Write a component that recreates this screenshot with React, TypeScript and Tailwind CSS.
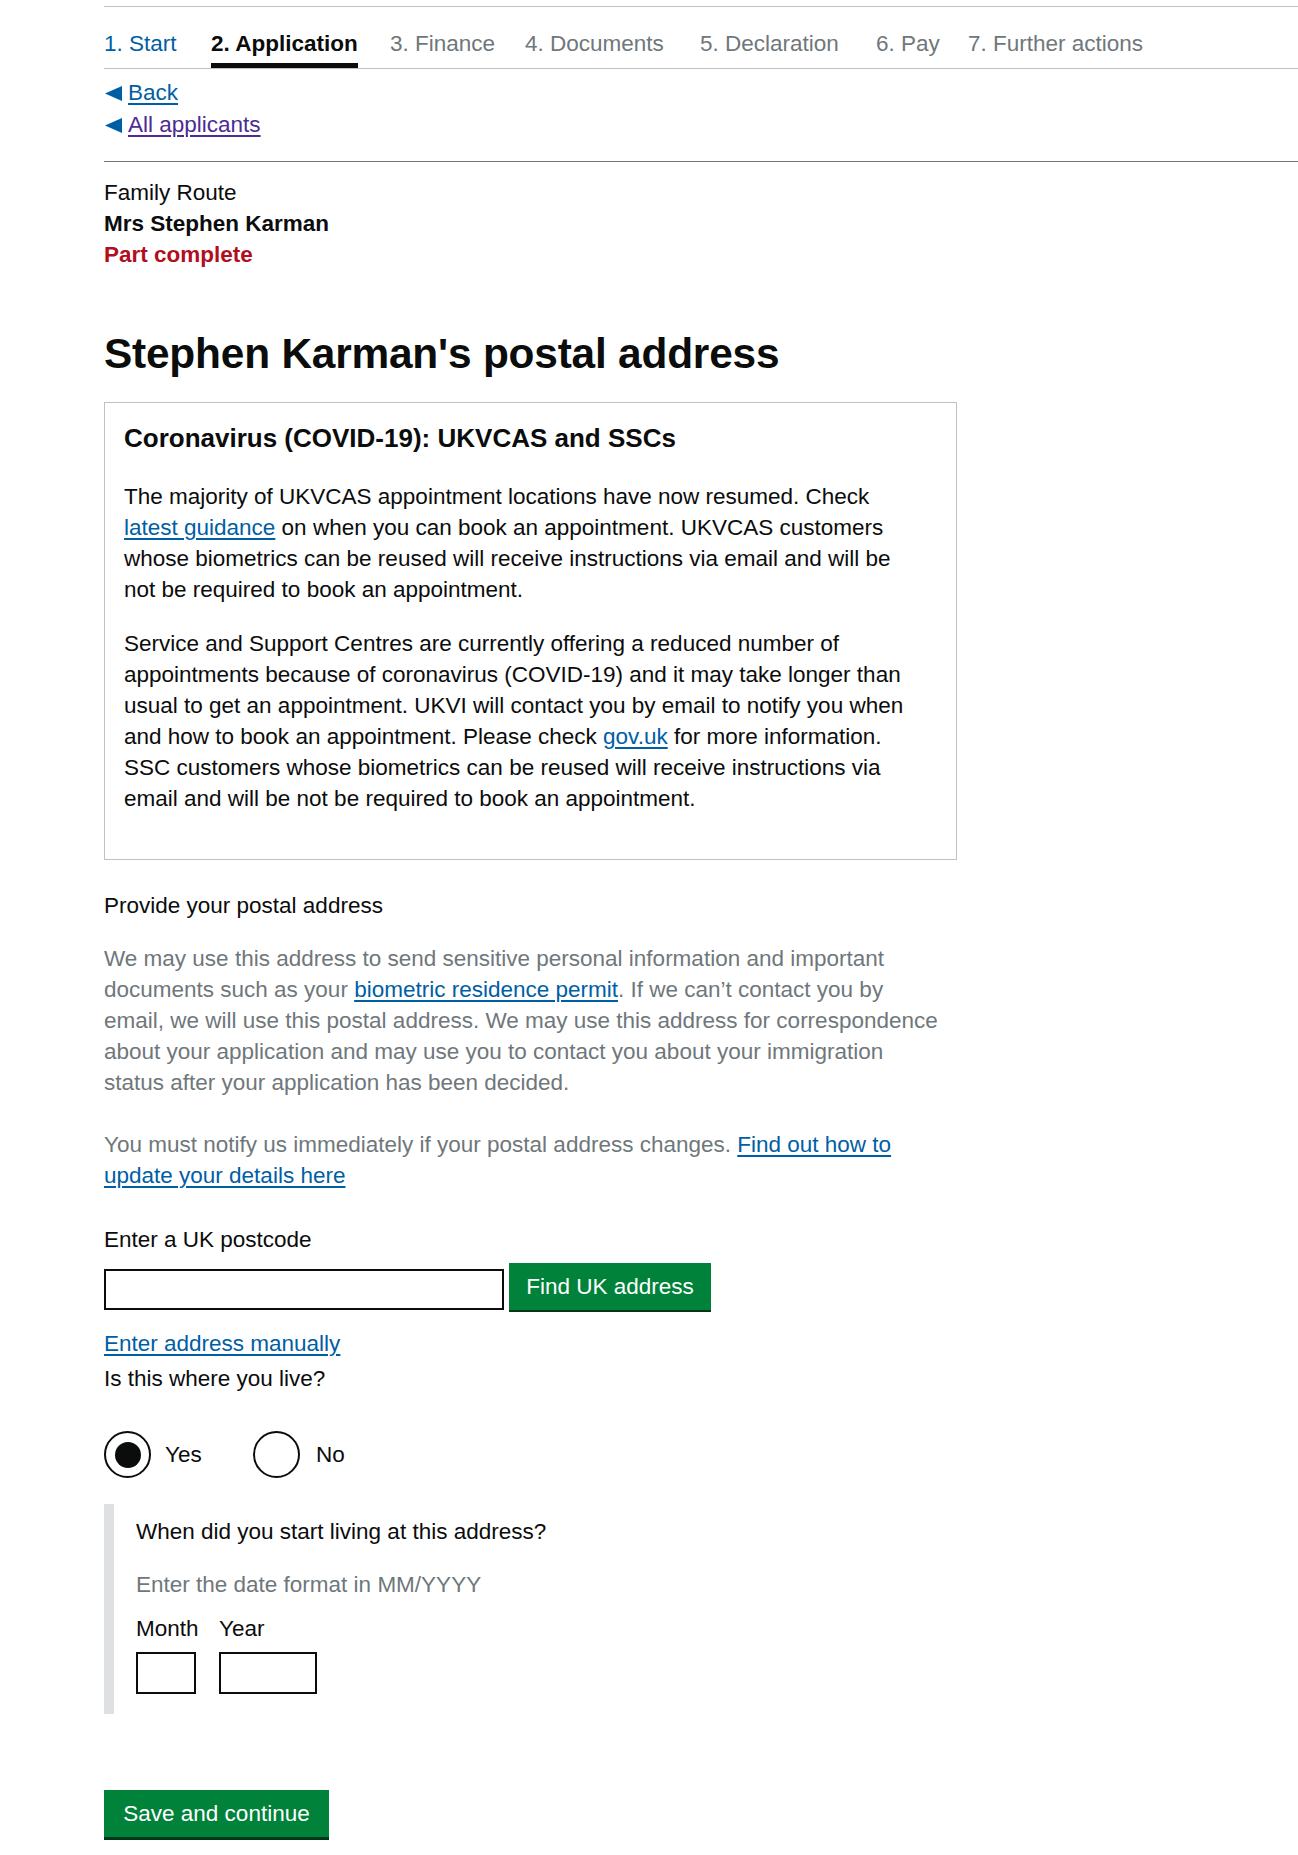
import React from "react";

const tabs = [
  { label: "1. Start", w: "w-[107px]", kind: "link" },
  { label: "2. Application", w: "w-[179px]", kind: "active" },
  { label: "3. Finance", w: "w-[135px]", kind: "off" },
  { label: "4. Documents", w: "w-[175px]", kind: "off" },
  { label: "5. Declaration", w: "w-[176px]", kind: "off" },
  { label: "6. Pay", w: "w-[92px]", kind: "off" },
  { label: "7. Further actions", w: "w-[200px]", kind: "off" },
];

function Triangle() {
  return (
    <svg width="17" height="15" viewBox="0 0 17 15" className="shrink-0">
      <polygon points="0,7.5 17,0 17,15" fill="#005ea5" />
    </svg>
  );
}

const link = "text-[#005ea5] underline decoration-2 underline-offset-[3px]";

export default function App() {
  return (
    <div className="min-h-screen bg-white font-['Liberation_Sans',Arial,sans-serif] text-[22.5px] leading-[31px] text-[#0b0c0c]">
      <div className="pl-[104px] pt-[6px] pb-[15px]">
        {/* Tabs */}
        <nav className="flex border-y border-[#bfc1c3]">
          {tabs.map((t) => (
            <div key={t.label} className={`${t.w} shrink-0 pt-[21px]`}>
              {t.kind === "active" ? (
                <span className="inline-block whitespace-nowrap border-b-[5px] border-[#0b0c0c] pb-[4px] font-bold text-[#0b0c0c]">
                  {t.label}
                </span>
              ) : t.kind === "link" ? (
                <span className="inline-block whitespace-nowrap pb-[9px] text-[#005ea5]">{t.label}</span>
              ) : (
                <span className="inline-block whitespace-nowrap pb-[9px] text-[#6f777b]">{t.label}</span>
              )}
            </div>
          ))}
        </nav>

        {/* Back links */}
        <div className="mt-[8px] leading-[32px]">
          <div className="flex items-center gap-[6px] pl-[1px]">
            <Triangle />
            <a href="#" className={link}>Back</a>
          </div>
          <div className="flex items-center gap-[6px] pl-[1px]">
            <Triangle />
            <a href="#" className="text-[#4c2c92] underline decoration-2 underline-offset-[3px]">All applicants</a>
          </div>
        </div>

        <div className="mt-[20px] h-px bg-[#6f777b]" />

        {/* Meta */}
        <div className="mt-[15px]">
          <div>Family Route</div>
          <div className="font-bold">Mrs Stephen Karman</div>
          <div className="font-bold text-[#b10e1e]">Part complete</div>
        </div>

        <h1 className="mt-[59px] text-[42.4px] font-bold leading-[50px] tracking-[-0.2px]">Stephen Karman's postal address</h1>

        {/* COVID box */}
        <div className="mt-[23px] w-[853px] border border-[#bfc1c3] px-[19px] pt-[19px] pb-[45px]">
          <h2 className="text-[26px] font-bold leading-[32px]">Coronavirus (COVID-19): UKVCAS and SSCs</h2>
          <p className="mt-[27px] whitespace-nowrap">
            The majority of UKVCAS appointment locations have now resumed. Check
            <br />
            <a href="#" className={link}>latest guidance</a> on when you can book an appointment. UKVCAS customers
            <br />
            whose biometrics can be reused will receive instructions via email and will be
            <br />
            not be required to book an appointment.
          </p>
          <p className="mt-[23px] whitespace-nowrap">
            Service and Support Centres are currently offering a reduced number of
            <br />
            appointments because of coronavirus (COVID-19) and it may take longer than
            <br />
            usual to get an appointment. UKVI will contact you by email to notify you when
            <br />
            and how to book an appointment. Please check <a href="#" className={link}>gov.uk</a> for more information.
            <br />
            SSC customers whose biometrics can be reused will receive instructions via
            <br />
            email and will be not be required to book an appointment.
          </p>
        </div>

        <div className="mt-[30px]">Provide your postal address</div>

        <p className="mt-[22px] whitespace-nowrap text-[#6f777b]">
          We may use this address to send sensitive personal information and important
          <br />
          documents such as your <a href="#" className={link}>biometric residence permit</a>. If we can’t contact you by
          <br />
          email, we will use this postal address. We may use this address for correspondence
          <br />
          about your application and may use you to contact you about your immigration
          <br />
          status after your application has been decided.
        </p>

        <p className="mt-[31px] whitespace-nowrap text-[#6f777b]">
          You must notify us immediately if your postal address changes. <a href="#" className={link}>Find out how to</a>
          <br />
          <a href="#" className={link}>update your details here</a>
        </p>

        <label className="mt-[33px] block">Enter a UK postcode</label>
        <div className="mt-[8px] flex items-end gap-[5px]">
          <input type="text" className="h-[41px] w-[400px] border-2 border-[#0b0c0c] bg-white px-2 outline-none" />
          <button className="h-[47px] w-[202px] bg-[#00823b] text-center text-white shadow-[0_2px_0_#003618]">
            Find UK address
          </button>
        </div>

        <div className="mt-[18px]">
          <a href="#" className={link}>Enter address manually</a>
        </div>
        <div className="mt-[4px]">Is this where you live?</div>

        {/* Radios */}
        <div className="mt-[37px] flex items-center">
          <div className="flex w-[149px] items-center gap-[14px]">
            <span className="flex h-[47px] w-[47px] items-center justify-center rounded-full border-2 border-[#0b0c0c]">
              <span className="h-[26px] w-[26px] rounded-full bg-[#0b0c0c]" />
            </span>
            <span>Yes</span>
          </div>
          <div className="flex items-center gap-[16px]">
            <span className="h-[47px] w-[47px] rounded-full border-2 border-[#0b0c0c]" />
            <span>No</span>
          </div>
        </div>

        {/* Conditional */}
        <div className="mt-[26px] border-l-[10px] border-[#dee0e2] pl-[22px] pt-[12px] pb-[20px]">
          <div>When did you start living at this address?</div>
          <div className="mt-[22px] text-[#6f777b]">Enter the date format in MM/YYYY</div>
          <div className="mt-[13px] flex">
            <div className="mr-[21px] flex flex-col">
              <span className="w-[62px]">Month</span>
              <input type="text" className="mt-[8px] h-[42px] w-[60px] border-2 border-[#0b0c0c] bg-white outline-none" />
            </div>
            <div className="flex flex-col">
              <span>Year</span>
              <input type="text" className="mt-[8px] h-[42px] w-[98px] border-2 border-[#0b0c0c] bg-white outline-none" />
            </div>
          </div>
        </div>

        <button className="mt-[76px] h-[47px] w-[225px] bg-[#00823b] text-center text-white shadow-[0_3px_0_#003618]">
          Save and continue
        </button>
      </div>
    </div>
  );
}
